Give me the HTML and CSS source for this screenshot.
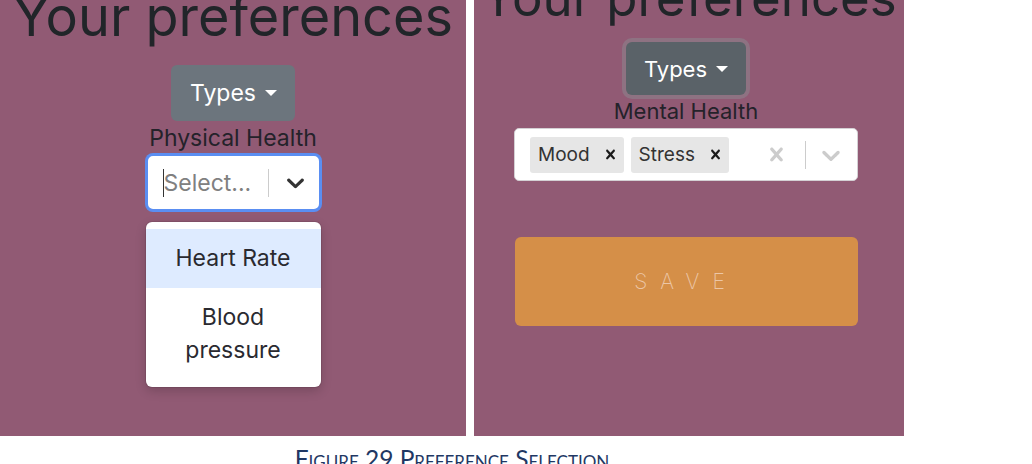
FILE: index.html
```html
<!DOCTYPE html>
<html lang="en">
<head>
<meta charset="utf-8">
<title>Preference Selection</title>
<link rel="stylesheet" href="styles.css">
</head>
<body>
<div class="figure">
  <div class="panels">
    <section class="panel panel-left">
      <h1 class="title">Your preferences</h1>
      <button class="types" type="button">Types<span class="caret"></span></button>
      <div class="label">Physical Health</div>
      <div class="select-wrap">
        <div class="select">
          <div class="value"><span class="cursor"></span><span class="placeholder">Select...</span></div>
          <span class="sep"></span>
          <span class="indicator">
            <svg viewBox="0 0 20 20" width="29" height="29"><path d="M4.516 7.548c0.436-0.446 1.043-0.481 1.576 0l3.908 3.747 3.908-3.747c0.533-0.481 1.141-0.446 1.574 0 0.436 0.445 0.408 1.197 0 1.615-0.406 0.418-4.695 4.502-4.695 4.502-0.217 0.223-0.502 0.335-0.787 0.335s-0.57-0.112-0.789-0.335c0 0-4.287-4.084-4.695-4.502s-0.436-1.170 0-1.615z"/></svg>
          </span>
        </div>
        <div class="menu">
          <div class="option focused">Heart Rate</div>
          <div class="option">Blood pressure</div>
        </div>
      </div>
    </section>
    <section class="panel panel-right">
      <h1 class="title title-right">Your preferences</h1>
      <button class="types types-active" type="button">Types<span class="caret"></span></button>
      <div class="label label-right">Mental Health</div>
      <div class="multi">
        <div class="chips">
          <span class="chip"><span class="chip-text">Mood</span><span class="chip-x"><svg viewBox="0 0 20 20" width="19" height="19"><path d="M14.348 14.849c-0.469 0.469-1.229 0.469-1.697 0l-2.651-3.030-2.651 3.029c-0.469 0.469-1.229 0.469-1.697 0-0.469-0.469-0.469-1.229 0-1.697l2.758-3.15-2.759-3.152c-0.469-0.469-0.469-1.228 0-1.697s1.228-0.469 1.697 0l2.652 3.031 2.651-3.031c0.469-0.469 1.228-0.469 1.697 0s0.469 1.229 0 1.697l-2.758 3.152 2.758 3.15c0.469 0.469 0.469 1.229 0 1.698z"/></svg></span></span>
          <span class="chip"><span class="chip-text">Stress</span><span class="chip-x"><svg viewBox="0 0 20 20" width="19" height="19"><path d="M14.348 14.849c-0.469 0.469-1.229 0.469-1.697 0l-2.651-3.030-2.651 3.029c-0.469 0.469-1.229 0.469-1.697 0-0.469-0.469-0.469-1.229 0-1.697l2.758-3.15-2.759-3.152c-0.469-0.469-0.469-1.228 0-1.697s1.228-0.469 1.697 0l2.652 3.031 2.651-3.031c0.469-0.469 1.228-0.469 1.697 0s0.469 1.229 0 1.697l-2.758 3.152 2.758 3.15c0.469 0.469 0.469 1.229 0 1.698z"/></svg></span></span>
        </div>
        <span class="indicator light clear">
          <svg viewBox="0 0 20 20" width="27" height="27"><path d="M14.348 14.849c-0.469 0.469-1.229 0.469-1.697 0l-2.651-3.030-2.651 3.029c-0.469 0.469-1.229 0.469-1.697 0-0.469-0.469-0.469-1.229 0-1.697l2.758-3.15-2.759-3.152c-0.469-0.469-0.469-1.228 0-1.697s1.228-0.469 1.697 0l2.652 3.031 2.651-3.031c0.469-0.469 1.228-0.469 1.697 0s0.469 1.229 0 1.697l-2.758 3.152 2.758 3.150c0.469 0.469 0.469 1.229 0 1.698z"/></svg>
        </span>
        <span class="sep sep-right"></span>
        <span class="indicator light chevron-right">
          <svg viewBox="0 0 20 20" width="30" height="30"><path d="M4.516 7.548c0.436-0.446 1.043-0.481 1.576 0l3.908 3.747 3.908-3.747c0.533-0.481 1.141-0.446 1.574 0 0.436 0.445 0.408 1.197 0 1.615-0.406 0.418-4.695 4.502-4.695 4.502-0.217 0.223-0.502 0.335-0.787 0.335s-0.57-0.112-0.789-0.335c0 0-4.287-4.084-4.695-4.502s-0.436-1.170 0-1.615z"/></svg>
        </span>
      </div>
      <button class="save" type="button">SAVE</button>
    </section>
  </div>
  <p class="caption">Figure 29 Preference Selection</p>
</div>
</body>
</html>
```
FILE: styles.css
```css
html, body {
  margin: 0;
  padding: 0;
  background: #ffffff;
}

body {
  font-family: Inter, "Liberation Sans", sans-serif;
  color: #212529;
}

.figure {
  width: 904px;
}

.panels {
  display: flex;
  gap: 8px;
}

.panel {
  height: 436px;
  background: #915a74;
  overflow: hidden;
  display: flex;
  flex-direction: column;
  align-items: center;
}

.panel-left {
  width: 466px;
}

.panel-right {
  width: 430px;
  box-sizing: border-box;
  padding-right: 6px;
}

.title {
  margin: -10px 0 0;
  font-size: 54px;
  font-weight: 400;
  line-height: 1;
  white-space: nowrap;
  color: #212529;
}

.title-right {
  margin: -28px 0 0 6px;
  font-size: 51px;
}

.types {
  margin-top: 21px;
  display: flex;
  align-items: center;
  height: 56px;
  padding: 0 18px 0 19px;
  border: none;
  border-radius: 6px;
  background: #6c757d;
  color: #ffffff;
  font-family: Inter, "Liberation Sans", sans-serif;
  font-size: 23px;
  line-height: 36px;
}

.caret {
  display: inline-block;
  margin-left: 9px;
  width: 0;
  height: 0;
  border-top: 6px solid #ffffff;
  border-left: 6px solid transparent;
  border-right: 6px solid transparent;
}

.types-active {
  margin-top: 19px;
  height: 53px;
  padding: 0 18px;
  font-size: 22px;
  background: #5a6268;
  box-shadow: 0 0 0 4px rgba(140, 130, 140, 0.6);
}

.label {
  font-size: 23px;
  line-height: 32px;
  margin-top: 1px;
  color: #24222a;
}

.label-right {
  font-size: 22px;
  line-height: 33px;
  margin-top: 0;
}

.select-wrap {
  position: relative;
  width: 175px;
}

.select {
  box-sizing: border-box;
  height: 57px;
  display: flex;
  align-items: center;
  background: #ffffff;
  border: 2px solid #5a8ef2;
  border-radius: 7px;
  box-shadow: 0 0 0 1px #5a8ef2;
}

.value {
  flex: 1;
  display: flex;
  align-items: center;
  padding-left: 15px;
  font-size: 23px;
}

.cursor {
  width: 1px;
  height: 28px;
  background: #333333;
}

.placeholder {
  color: #808080;
}

.sep {
  width: 1px;
  height: 28px;
  background: #cccccc;
}

.indicator {
  display: flex;
  align-items: center;
  padding: 0 9px 0 12px;
  fill: #333333;
}

.menu {
  position: absolute;
  top: 68px;
  left: 0;
  width: 175px;
  padding: 7px 0;
  background: #ffffff;
  border-radius: 6px;
  box-shadow: 0 0 0 1px rgba(0, 0, 0, 0.08), 0 4px 11px rgba(0, 0, 0, 0.18);
}

.option {
  padding: 13px 14px;
  font-size: 23px;
  line-height: 33px;
  text-align: center;
  color: #2a2a30;
}

.option.focused {
  background: #deebff;
}

.multi {
  box-sizing: border-box;
  width: 344px;
  height: 53px;
  margin-top: 0;
  display: flex;
  align-items: center;
  background: #ffffff;
  border: 1px solid #d4d0d4;
  border-radius: 5px;
}

.chips {
  flex: 1;
  display: flex;
  gap: 7px;
  padding-left: 15px;
}

.chip {
  display: flex;
  align-items: center;
  height: 36px;
  background: #e6e6e6;
  border-radius: 3px;
}

.chip-text {
  padding-left: 8px;
  font-size: 19px;
  color: #333333;
}

.chip-x {
  display: flex;
  align-items: center;
  padding: 0 4px 0 11px;
  fill: #1a1a1a;
}

.indicator.light {
  fill: #cccccc;
}

.clear {
  padding: 0 15px 0 0;
}

.sep-right {
  height: 28px;
}

.chevron-right {
  padding: 0 11px 0 10px;
}

.save {
  margin-top: 56px;
  width: 343px;
  height: 89px;
  padding: 0;
  border: none;
  border-radius: 6px;
  background: #d58f48;
  color: #ecc6a6;
  font-family: Inter, "Liberation Sans", sans-serif;
  font-size: 21px;
  font-weight: 200;
  letter-spacing: 13px;
}

.caption {
  margin: 8px 0 0;
  text-align: center;
  font-family: Lato, "Open Sans", sans-serif;
  font-variant: small-caps;
  font-size: 24.5px;
  line-height: 1.2;
  color: #1f3864;
}
```
